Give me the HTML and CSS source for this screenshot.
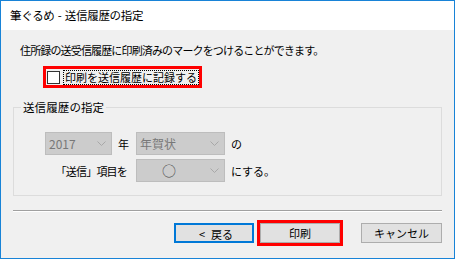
FILE: index.html
```html
<!DOCTYPE html>
<html lang="ja">
<head>
<meta charset="utf-8">
<title>筆ぐるめ - 送信履歴の指定</title>
<link rel="stylesheet" href="styles.css">
</head>
<body>
<div class="window">
  <div class="titlebar">筆ぐるめ - 送信履歴の指定</div>
  <div class="content">
    <p class="intro">住所録の送受信履歴に印刷済みのマークをつけることができます。</p>
    <div class="check-row">
      <label class="check-box">
        <span class="box"></span>
        <span class="check-label">印刷を送信履歴に記録する</span>
      </label>
    </div>
    <fieldset class="group">
      <legend class="legend">送信履歴の指定</legend>
      <div class="grid">
        <div class="cell-year">
          <div class="select select-year"><span class="val">2017</span><svg class="chev" width="9" height="5" viewBox="0 0 9 5"><polyline points="0.5,0.5 4.5,4.5 8.5,0.5" fill="none" stroke="#a8a8a8" stroke-width="1"/></svg></div>
          <span class="txt nen">年</span>
        </div>
        <div class="select"><span class="val">年賀状</span><svg class="chev" width="9" height="5" viewBox="0 0 9 5"><polyline points="0.5,0.5 4.5,4.5 8.5,0.5" fill="none" stroke="#a8a8a8" stroke-width="1"/></svg></div>
        <span class="txt">の</span>
        <span class="txt label-right">「送信」項目を</span>
        <div class="select"><span class="val center">○</span><svg class="chev" width="9" height="5" viewBox="0 0 9 5"><polyline points="0.5,0.5 4.5,4.5 8.5,0.5" fill="none" stroke="#a8a8a8" stroke-width="1"/></svg></div>
        <span class="txt">にする。</span>
      </div>
    </fieldset>
    <div class="separator"></div>
    <div class="buttons">
      <button class="btn btn-back"><span class="lt">&lt;</span>戻る</button>
      <button class="btn btn-print">印刷</button>
      <button class="btn btn-cancel">キャンセル</button>
    </div>
  </div>
</div>
</body>
</html>
```
FILE: styles.css
```css
* { box-sizing: border-box; }
html, body { margin: 0; padding: 0; }
body {
  font-family: "Noto Sans CJK JP", "Noto Sans", sans-serif;
  font-size: 11px;
  color: #000;
  background: #f0f0f0;
}
.window {
  width: 455px;
  height: 259px;
  border: 1px solid #1883d7;
  background: #f0f0f0;
  overflow: hidden;
}
.titlebar {
  height: 29px;
  line-height: 29px;
  background: #fff;
  padding-left: 9px;
  font-size: 11.5px;
  letter-spacing: -0.3px;
  word-spacing: 1px;
}
.content {
  padding: 12px 0 0 12px;
}
.intro {
  margin: 0 0 0 7px;
  height: 16px;
  line-height: 16px;
  letter-spacing: -0.85px;
  white-space: nowrap;
}
.check-row {
  margin-top: 8px;
  height: 22px;
}
.check-box {
  margin-left: 30px;
  display: inline-flex;
  align-items: center;
  width: 159px;
  height: 22px;
  border: 3px solid #ff0000;
  padding-left: 1px;
}
.box {
  width: 13px;
  height: 13px;
  border: 1px solid #333;
  background: #fff;
  flex: none;
}
.check-label {
  margin-left: 3px;
  border: 1px dotted #000;
  padding: 0 1px;
  line-height: 13px;
  height: 15px;
  white-space: nowrap;
  letter-spacing: 0px;
}
.group {
  margin: 11px 0 0 0;
  width: 429px;
  height: 97px;
  border: 1px solid #dcdcdc;
  padding: 17px 0 0 7px;
}
.legend {
  padding: 0 2px;
  line-height: 16px;
  font-size: 11.5px;
  letter-spacing: 0.1px;
}
.grid {
  margin-left: 24px;
  display: grid;
  grid-template-columns: 85px 89px auto;
  grid-template-rows: 23px 23px;
  column-gap: 6px;
  row-gap: 4px;
  align-items: center;
}
.cell-year {
  display: flex;
  align-items: center;
}
.select {
  height: 23px;
  width: 89px;
  background: #cccccc;
  border: 1px solid #bdbdbd;
  color: #787878;
  font-size: 12px;
  display: flex;
  align-items: center;
  padding-left: 3px;
}
.select-year {
  width: 67px;
}
.val {
  flex: 1;
  line-height: 21px;
}
.val.center {
  text-align: center;
  padding-right: 12px;
  font-size: 14px;
  color: #4a4a4a;
}
.chev {
  flex: none;
  margin-right: 5px;
}
.txt {
  white-space: nowrap;
}
.nen {
  margin-left: 6px;
}
.label-right {
  text-align: right;
  padding-right: 3px;
  letter-spacing: -0.8px;
}
.separator {
  margin-top: 14px;
  width: 429px;
  border-top: 1px solid #a0a0a0;
  border-bottom: 1px solid #ffffff;
}
.buttons {
  margin-top: 11px;
  display: flex;
  padding-left: 161px;
}
.btn {
  height: 20px;
  width: 80px;
  background: #e1e1e1;
  border: 1px solid #adadad;
  font-family: "Noto Sans CJK JP", "Noto Sans", sans-serif;
  font-size: 11px;
  color: #000;
  padding: 0;
  line-height: 18px;
}
.lt {
  margin-right: 6px;
}
.btn-back {
  border: 2px solid #0078d7;
  padding-left: 4px;
}
.btn-print {
  margin-left: 6px;
  outline: 3px solid #ff0000;
}
.btn-cancel {
  margin-left: 21px;
  width: 81px;
}
```
